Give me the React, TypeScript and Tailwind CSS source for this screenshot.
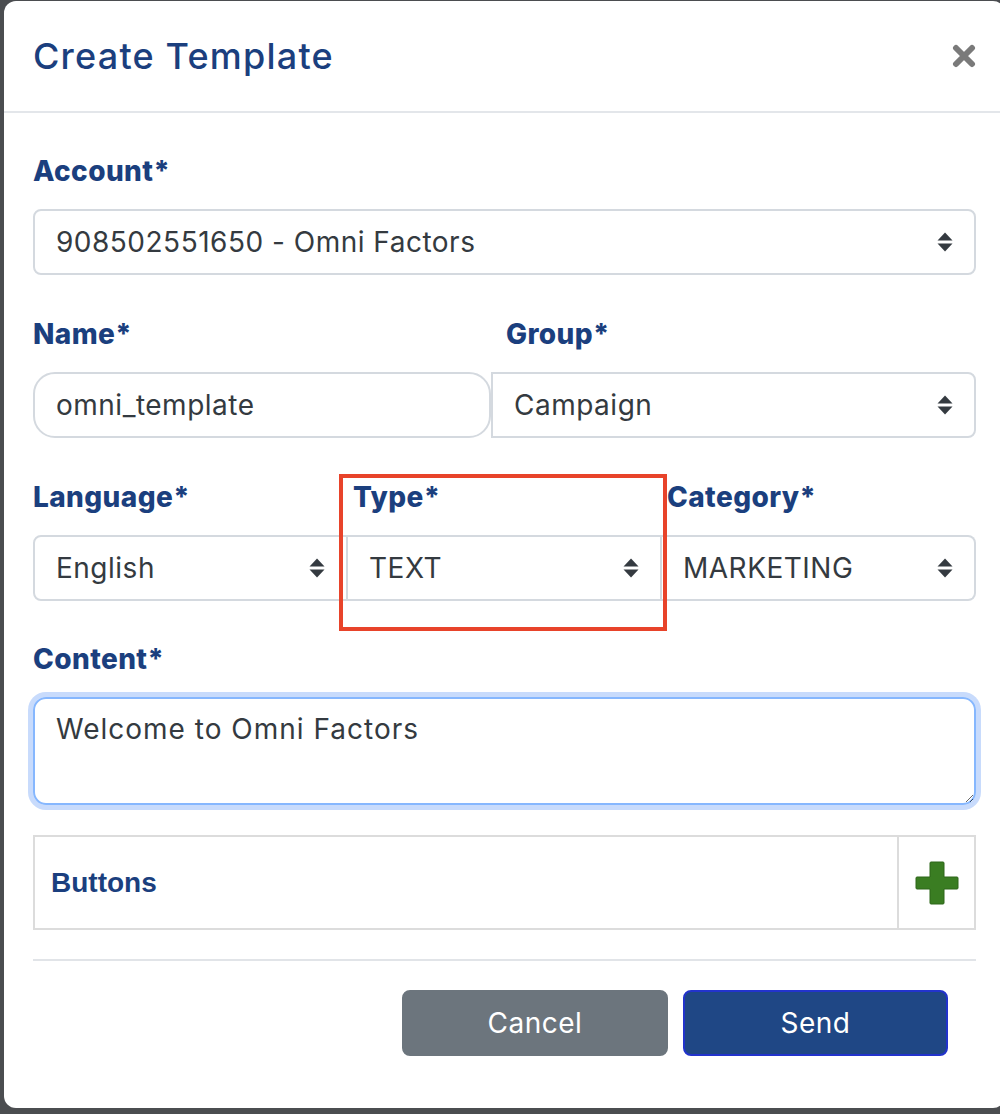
import React from "react";

const poppins = "font-['Inter','Open_Sans',sans-serif]";

function Arrows() {
  return (
    <svg width="16" height="20" viewBox="0 0 16 20" className="shrink-0">
      <path d="M8 0.5 L15.5 8.5 H0.5 Z" fill="#343a40" />
      <path d="M8 19.5 L15.5 11.5 H0.5 Z" fill="#343a40" />
    </svg>
  );
}

function CloseIcon() {
  return (
    <svg width="24" height="24" viewBox="0 0 24 24">
      <path d="M4 4 L20 20 M20 4 L4 20" stroke="#7a7a7a" strokeWidth="6" strokeLinecap="round" />
    </svg>
  );
}

function PlusIcon() {
  return (
    <svg width="46" height="46" viewBox="0 0 46 46">
      <path
        d="M17 2 H29 Q30 2 30 3 V17 H43 Q44 17 44 18 V28 Q44 29 43 29 H30 V43 Q30 44 29 44 H17 Q16 44 16 43 V29 H3 Q2 29 2 28 V18 Q2 17 3 17 H16 V3 Q16 2 17 2 Z"
        fill="#3a7d22"
        stroke="#2c6619"
        strokeWidth="1"
      />
    </svg>
  );
}

function Label({ children, className = "" }: { children: React.ReactNode; className?: string }) {
  return (
    <div className={`text-[28px] leading-[36px] font-extrabold tracking-[0.4px] text-[#1b3f7e] mb-[20px] ${className}`}>
      {children}
    </div>
  );
}

function SelectBox({ value, className = "" }: { value: string; className?: string }) {
  return (
    <div
      className={`flex items-center justify-between h-[66px] border-2 border-[#d4d9df] pl-[21px] pr-[21px] text-[28px] tracking-[0.5px] text-[#343a40] ${className}`}
    >
      <span>{value}</span>
      <Arrows />
    </div>
  );
}

export default function App() {
  return (
    <div className={`h-[1114px] overflow-hidden bg-[#4b4d50] pl-[4px] pt-[1px] ${poppins}`}>
      <div className="w-[1001px] h-[1107px] bg-white rounded-[12px]">
        {/* header */}
        <div className="h-[112px] flex items-center justify-between px-[29px] border-b-2 border-[#e3e6ea]">
          <h1 className="text-[36px] font-medium tracking-[1.2px] text-[#1b3f7e]">Create Template</h1>
          <CloseIcon />
        </div>

        <div className="px-[29px] pt-[40px]">
          {/* account */}
          <Label>Account*</Label>
          <SelectBox value="908502551650 - Omni Factors" className="rounded-[8px]" />

          {/* name / group */}
          <div className="flex mt-[41px]">
            <div className="w-[458px]">
              <Label>Name*</Label>
              <div className="h-[66px] flex items-center border-2 border-[#d4d9df] rounded-[22px] pl-[21px] text-[28px] tracking-[0.5px] text-[#343a40]">
                omni_template
              </div>
            </div>
            <div className="flex-1">
              <Label className="pl-[15px]">Group*</Label>
              <SelectBox value="Campaign" className="rounded-r-[8px]" />
            </div>
          </div>

          {/* language / type / category */}
          <div className="flex mt-[41px]">
            <div className="w-[315px]">
              <Label>Language*</Label>
              <SelectBox value="English" className="rounded-l-[8px]" />
            </div>
            <div className="w-[314px] relative">
              <Label className="pl-[5px]">Type*</Label>
              <SelectBox value="TEXT" className="border-l-0" />
              <div className="absolute -left-[9px] -top-[5px] -right-[5px] -bottom-[30px] border-4 border-[#e8432a] pointer-events-none" />
            </div>
            <div className="flex-1">
              <Label className="pl-[5px]">Category*</Label>
              <SelectBox value="MARKETING" className="border-l-0 rounded-r-[8px]" />
            </div>
          </div>

          {/* content */}
          <Label className="mt-[40px]">Content*</Label>
          <textarea
            readOnly
            defaultValue="Welcome to Omni Factors"
            className="block w-full h-[108px] rounded-[13px] border-2 border-[#86b7fe] shadow-[0_0_0_5px_#c8dbfc] px-[21px] pt-[12px] text-[28px] leading-[36px] tracking-[1px] text-[#343a40] outline-none"
          />

          {/* buttons table */}
          <div className="flex h-[95px] mt-[30px] border-2 border-[#dcdcdc]">
            <div className="flex-1 flex items-center pl-[16px] font-['Liberation_Sans',Arial,sans-serif] font-bold text-[28px] text-[#1b3f7e]">
              Buttons
            </div>
            <div className="w-[77px] border-l-2 border-[#dcdcdc] flex items-center justify-center">
              <PlusIcon />
            </div>
          </div>

          <div className="h-[2px] bg-[#e1e4e8] mt-[29px]" />

          {/* footer */}
          <div className="flex justify-end gap-[15px] mt-[29px] pr-[28px]">
            <button className="w-[266px] h-[66px] rounded-[8px] bg-[#6c757d] border-2 border-[#6c757d] text-white text-[28px] tracking-[0.5px]">
              Cancel
            </button>
            <button className="w-[265px] h-[66px] rounded-[8px] bg-[#1f4785] border-2 border-[#2233cc] text-white text-[28px] tracking-[0.5px]">
              Send
            </button>
          </div>
        </div>
      </div>
    </div>
  );
}
